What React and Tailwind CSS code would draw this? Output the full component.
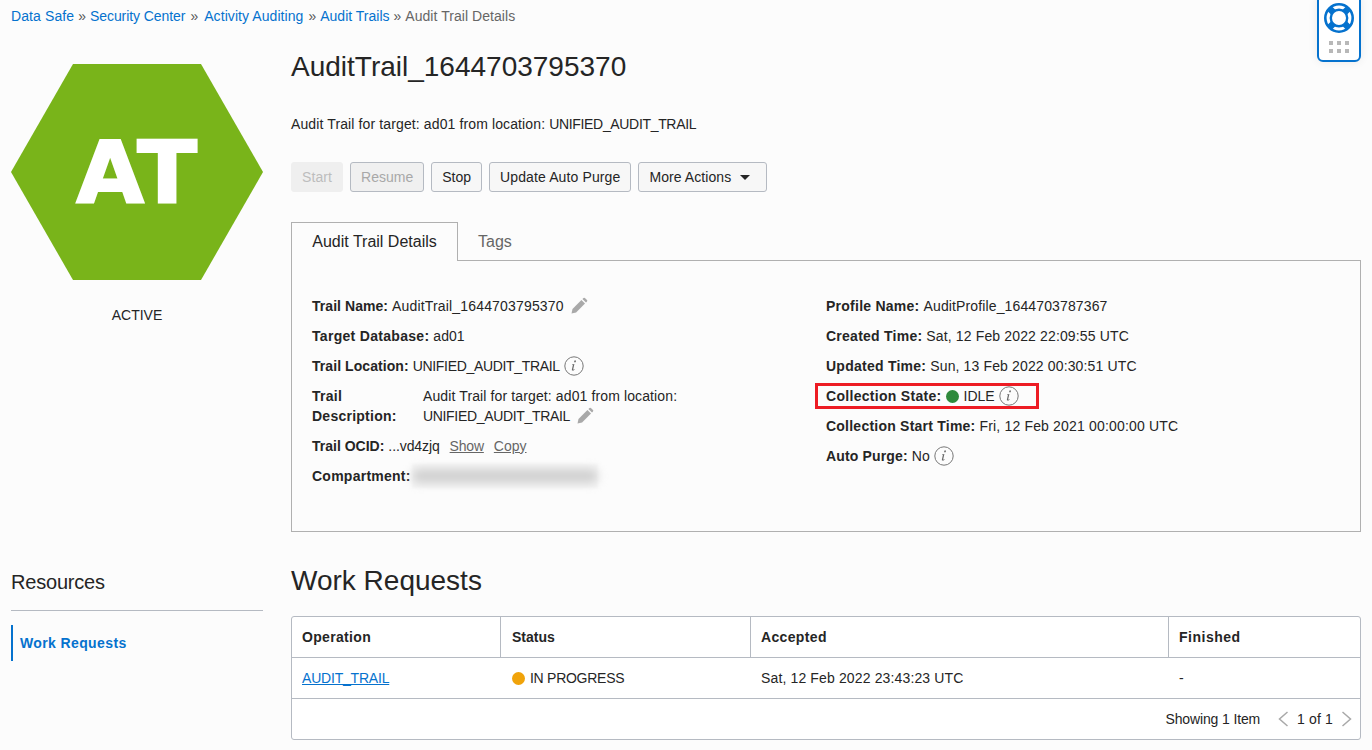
import { useState } from "react";

const Info = () => (
    <svg width="20" height="20" viewBox="0 0 20 20" className="inline-block shrink-0">
        <circle cx="10" cy="10" r="9.2" fill="none" stroke="#777" strokeWidth="1" />
        <path d="M10.4 4.6h1.6l-.3 1.7h-1.6zM10.4 8l-2.3.4-.1.5.9.1-1 4.4c-.2.8.2 1.2.9 1.2.6 0 1.2-.4 1.8-1.2l-.3-.3c-.4.4-.7.6-.9.6-.2 0-.2-.1-.2-.4z" fill="#666" />
    </svg>
);

const Pencil = () => (
    <svg width="18" height="18" viewBox="0 0 18 18" className="inline-block shrink-0">
        <path d="M1.5 16.5l1-4.6L11.4 3l3.6 3.6-8.9 8.9z" fill="#a9a9a9" />
        <path d="M12.4 2l1.1-1a1 1 0 0 1 1.4 0l2.1 2.1a1 1 0 0 1 0 1.4l-1 1.1z" fill="#a9a9a9" />
    </svg>
);

const Field = ({ label, track = "tracking-[0.25px]", children }) => (
    <div className="flex items-center h-[30px] whitespace-nowrap">
        <span className={`font-bold mr-1 ${track}`}>{label}</span>
        {children}
    </div>
);

const Button = ({ children, disabled, plain }) => (
    <button
        className={`h-[30px] px-[10px] rounded-[3px] border text-[14px] flex items-center ${
            plain
                ? "border-[#efefef] bg-[#efefef] text-[#bdbdbd]"
                : disabled
                  ? "border-[#b5bac2] bg-[#f0f0f0] text-[#a8a8a8]"
                  : "border-[#b5bac2] bg-[#f7f7f7] text-[#252525]"
        }`}
    >
        {children}
    </button>
);

const HelpWidget = () => (
    <div className="absolute top-[-4px] right-[11px] w-[44px] h-[66px] bg-white border-2 border-[#0572ce] rounded-b-[6px] shadow-[0_0_10px_rgba(0,0,0,0.08)] flex flex-col items-center">
        <svg width="30" height="30" viewBox="0 0 30 30" className="mt-[5px]">
            <circle cx="15" cy="15" r="13.7" fill="#fff" stroke="#0572ce" strokeWidth="2.6" />
            <g stroke="#0572ce" strokeWidth="6.5">
                <path d="M5.5 5.5l6 6" />
                <path d="M24.5 5.5l-6 6" />
                <path d="M5.5 24.5l6-6" />
                <path d="M24.5 24.5l-6-6" />
            </g>
            <circle cx="15" cy="15" r="8.2" fill="#fff" stroke="#0572ce" strokeWidth="2.4" />
        </svg>
        <div className="grid grid-cols-3 gap-x-[4px] gap-y-[4px] mt-[8px]">
            {[0, 1, 2, 3, 4, 5].map((i) => (
                <div key={i} className="w-[4px] h-[4px] bg-[#b8b8b8]" />
            ))}
        </div>
    </div>
);

export default function App() {
    const [tab] = useState("details");

    return (
        <div className="relative h-[750px] overflow-hidden bg-[#fcfcfc] text-[14px] text-[#252525] font-['Liberation_Sans',Arial,sans-serif] px-[11px]">
            <HelpWidget />

            {/* Breadcrumb */}
            <div className="h-[32px] flex items-center text-[#0572ce] gap-[4px]">
                <span className="tracking-[0.1px]">Data Safe</span>
                <span className="text-[#555]">»</span>
                <span className="tracking-[-0.07px]">Security Center</span>
                <span className="text-[#555] ml-[1px] mr-[2px]">»</span>
                <span className="tracking-[0.07px]">Activity Auditing</span>
                <span className="text-[#555] ml-[1px]">»</span>
                <span>Audit Trails</span>
                <span className="text-[#555]">»</span>
                <span className="text-[#666] tracking-[0.05px]">Audit Trail Details</span>
            </div>

            <div className="flex gap-[28px]">
                {/* Left column */}
                <div className="w-[252px] shrink-0">
                    <div className="mt-[32px] w-[252px] h-[216px] bg-[#79b41a] flex items-center justify-center [clip-path:polygon(24.6%_0,75.4%_0,100%_50%,75.4%_100%,24.6%_100%,0_50%)]">
                        <span className="text-white font-bold text-[85px] leading-none font-['DejaVu_Sans',sans-serif] [-webkit-text-stroke:2px_white] scale-x-[1.03]">AT</span>
                    </div>
                    <div className="mt-[25px] text-center text-[14px] leading-[20px]">ACTIVE</div>

                    <div className="mt-[245px] text-[20px] leading-[24px] tracking-[-0.2px]">Resources</div>
                    <div className="mt-[16px] border-t border-[#b5bac2]" />
                    <div className="mt-[14px] h-[36px] border-l-2 border-[#0572ce] pl-[7px] flex items-center font-bold text-[#0572ce] tracking-[0.38px]">
                        Work Requests
                    </div>
                </div>

                {/* Main column */}
                <div className="flex-1 min-w-0">
                    <h1 className="mt-[15px] text-[28px] leading-[40px] font-normal">AuditTrail_1644703795370</h1>
                    <p className="mt-[27px] leading-[20px]">
                        <span className="tracking-[0.12px]">Audit Trail for target: ad01 from location: </span>
                        <span className="tracking-[-0.33px]">UNIFIED_AUDIT_TRAIL</span>
                    </p>

                    <div className="mt-[28px] flex gap-[7px]">
                        <Button plain>
                            <span className="tracking-[0.1px]">Start</span>
                        </Button>
                        <Button disabled>Resume</Button>
                        <Button>Stop</Button>
                        <Button>
                            <span className="tracking-[0.12px]">Update Auto Purge</span>
                        </Button>
                        <Button>
                            <span className="tracking-[0.08px]">More Actions</span>
                            <span className="ml-[9px] mr-[6px] w-0 h-0 border-x-[5px] border-x-transparent border-t-[5px] border-t-[#252525]" />
                        </Button>
                    </div>

                    {/* Tabs */}
                    <div className="mt-[30px] flex h-[39px] text-[16px]">
                        <div
                            className={`w-[167px] h-[39px] border border-b-0 border-[#b0b0b0] bg-[#fcfcfc] flex items-center justify-center relative z-10 ${
                                tab === "details" ? "text-[#252525]" : ""
                            }`}
                        >
                            Audit Trail Details
                        </div>
                        <div className="flex-1 border-b border-[#b0b0b0] pl-[20px] pt-[8px] text-[#666]">Tags</div>
                    </div>

                    <div className="h-[271px] border border-t-0 border-[#b0b0b0] pt-[30px] pl-[20px] flex">
                        <div className="w-[514px] shrink-0">
                            <Field label="Trail Name:" track="tracking-[0.05px]">
                                <span className="tracking-[0.17px]">AuditTrail_1644703795370</span>
                                <span className="ml-[6px] flex"><Pencil /></span>
                            </Field>
                            <Field label="Target Database:" track="tracking-[0.3px]">ad01</Field>
                            <Field label="Trail Location:" track="tracking-[0.07px]">
                                <span className="tracking-[-0.33px]">UNIFIED_AUDIT_TRAIL</span>
                                <span className="ml-[4px] flex"><Info /></span>
                            </Field>
                            <div className="flex h-[50px] pt-[5px] leading-[20px]">
                                <div className="w-[111px] font-bold shrink-0 tracking-[0.25px]">
                                    Trail
                                    <br />
                                    Description:
                                </div>
                                <div>
                                    <span className="tracking-[0.12px]">Audit Trail for target: ad01 from location:</span>
                                    <div className="flex items-center">
                                        <span className="tracking-[-0.33px]">UNIFIED_AUDIT_TRAIL</span>
                                        <span className="ml-[6px] flex"><Pencil /></span>
                                    </div>
                                </div>
                            </div>
                            <Field label="Trail OCID:" track="tracking-[0px]">
                                <span className="tracking-[-0.1px]">...vd4zjq</span>
                                <span className="ml-[10px] underline text-[#666] tracking-[-0.2px]">Show</span>
                                <span className="ml-[10px] underline text-[#666]">Copy</span>
                            </Field>
                            <Field label="Compartment:">
                                <span className="w-[186px] h-[24px] bg-[#f5f5f5] flex items-center blur-[1px] -ml-[3px]">
                                    <span className="w-full h-[14px] rounded-full bg-[#d0d0d0] blur-[5px]" />
                                </span>
                            </Field>
                        </div>
                        <div>
                            <Field label="Profile Name:">
                                <span className="tracking-[0.13px]">AuditProfile_1644703787367</span>
                            </Field>
                            <Field label="Created Time:">
                                <span className="tracking-[0.14px]">Sat, 12 Feb 2022 22:09:55 UTC</span>
                            </Field>
                            <Field label="Updated Time:">
                                <span className="tracking-[0.14px]">Sun, 13 Feb 2022 00:30:51 UTC</span>
                            </Field>
                            <div className="relative">
                                <Field label="Collection State:" track="tracking-[0.3px]">
                                    <span className="w-[13px] h-[13px] rounded-full bg-[#2f8a3c] mr-[5px]" />
                                    IDLE
                                    <span className="ml-[4px] flex"><Info /></span>
                                </Field>
                                <div className="absolute left-[-11px] top-[2px] w-[224px] h-[26px] border-[3px] border-[#ed1c24]" />
                            </div>
                            <Field label="Collection Start Time:" track="tracking-[0.23px]">
                                <span className="tracking-[0.17px]">Fri, 12 Feb 2021 00:00:00 UTC</span>
                            </Field>
                            <Field label="Auto Purge:" track="tracking-[0.15px]">
                                No
                                <span className="ml-[4px] flex"><Info /></span>
                            </Field>
                        </div>
                    </div>

                    {/* Work requests */}
                    <h2 className="mt-[29px] text-[28px] leading-[40px] font-normal">Work Requests</h2>
                    <div className="mt-[15px] border border-[#b5bac2] rounded-[3px] bg-white">
                        <div className="grid grid-cols-[209px_250px_418px_1fr] h-[41px] border-b border-[#b5bac2] font-bold">
                            <div className="flex items-center pl-[10px] border-r border-[#b5bac2] tracking-[0.33px]">Operation</div>
                            <div className="flex items-center pl-[11px] border-r border-[#b5bac2]">Status</div>
                            <div className="flex items-center pl-[10px] border-r border-[#b5bac2] tracking-[0.35px]">Accepted</div>
                            <div className="flex items-center pl-[10px] tracking-[0.5px]">Finished</div>
                        </div>
                        <div className="grid grid-cols-[209px_250px_418px_1fr] h-[41px] border-b border-[#b5bac2]">
                            <div className="flex items-center pl-[10px]">
                                <span className="underline text-[#0572ce] tracking-[-0.2px]">AUDIT_TRAIL</span>
                            </div>
                            <div className="flex items-center pl-[11px] tracking-[-0.27px]">
                                <span className="w-[13px] h-[13px] rounded-full bg-[#f0a30a] mr-[5px]" />
                                IN PROGRESS
                            </div>
                            <div className="flex items-center pl-[10px] tracking-[0.14px]">Sat, 12 Feb 2022 23:43:23 UTC</div>
                            <div className="flex items-center pl-[10px]">-</div>
                        </div>
                        <div className="h-[40px] flex items-center justify-end pr-[7px]">
                            <span className="tracking-[-0.14px]">Showing 1 Item</span>
                            <svg width="12" height="16" viewBox="0 0 12 16" className="ml-[17px]">
                                <path d="M10.5 1L2.5 8l8 7" fill="none" stroke="#a9a9a9" strokeWidth="1.5" />
                            </svg>
                            <span className="ml-[8px] tracking-[0.15px]">1 of 1</span>
                            <svg width="12" height="16" viewBox="0 0 12 16" className="ml-[8px]">
                                <path d="M1.5 1L9.5 8l-8 7" fill="none" stroke="#a9a9a9" strokeWidth="1.5" />
                            </svg>
                        </div>
                    </div>
                </div>
            </div>
        </div>
    );
}
